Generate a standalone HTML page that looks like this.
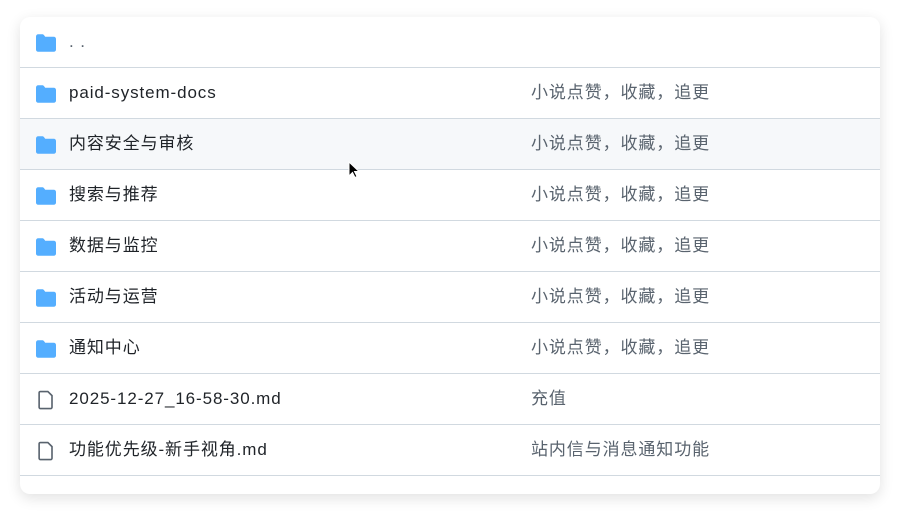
<!DOCTYPE html>
<html><head><meta charset="utf-8"><style>
body{margin:0;width:900px;height:515px;background:#fff;font-family:"Liberation Sans","Noto Sans CJK SC",sans-serif;overflow:hidden}
.card{position:absolute;left:20px;top:17px;width:860px;height:477px;border-radius:10px;background:#fff;box-shadow:0 4px 14px rgba(0,0,0,0.12);overflow:hidden}
.row{position:absolute;left:0;width:860px;height:50px;border-bottom:1px solid #d1d9e0;font-size:17px;letter-spacing:0.9px;color:#1f2328}
.row .ic{position:absolute;left:16px;top:16px}
.row .n{position:absolute;left:49px;top:15px;line-height:20px}
.row .d{position:absolute;left:511px;top:15px;line-height:20px;color:#59636e}
.hov{background:#f6f8fa}
</style></head><body>
<div class="card">
<div class="row" style="top:0"><svg class="ic" width="20" height="20" viewBox="0 0 16 16"><path fill="#54aeff" d="M1.75 1A1.75 1.75 0 0 0 0 2.75v10.5C0 14.216.784 15 1.75 15h12.5A1.75 1.75 0 0 0 16 13.25v-8.5A1.75 1.75 0 0 0 14.25 3H7.5a.25.25 0 0 1-.2-.1l-.9-1.2C6.07 1.26 5.55 1 5 1H1.75Z"/></svg><span class="n" style="color:#59636e">. .</span></div>
<div class="row" style="top:51px"><svg class="ic" width="20" height="20" viewBox="0 0 16 16"><path fill="#54aeff" d="M1.75 1A1.75 1.75 0 0 0 0 2.75v10.5C0 14.216.784 15 1.75 15h12.5A1.75 1.75 0 0 0 16 13.25v-8.5A1.75 1.75 0 0 0 14.25 3H7.5a.25.25 0 0 1-.2-.1l-.9-1.2C6.07 1.26 5.55 1 5 1H1.75Z"/></svg><span class="n">paid-system-docs</span><span class="d">小说点赞，收藏，追更</span></div>
<div class="row hov" style="top:102px"><svg class="ic" width="20" height="20" viewBox="0 0 16 16"><path fill="#54aeff" d="M1.75 1A1.75 1.75 0 0 0 0 2.75v10.5C0 14.216.784 15 1.75 15h12.5A1.75 1.75 0 0 0 16 13.25v-8.5A1.75 1.75 0 0 0 14.25 3H7.5a.25.25 0 0 1-.2-.1l-.9-1.2C6.07 1.26 5.55 1 5 1H1.75Z"/></svg><span class="n">内容安全与审核</span><span class="d">小说点赞，收藏，追更</span></div>
<div class="row" style="top:153px"><svg class="ic" width="20" height="20" viewBox="0 0 16 16"><path fill="#54aeff" d="M1.75 1A1.75 1.75 0 0 0 0 2.75v10.5C0 14.216.784 15 1.75 15h12.5A1.75 1.75 0 0 0 16 13.25v-8.5A1.75 1.75 0 0 0 14.25 3H7.5a.25.25 0 0 1-.2-.1l-.9-1.2C6.07 1.26 5.55 1 5 1H1.75Z"/></svg><span class="n">搜索与推荐</span><span class="d">小说点赞，收藏，追更</span></div>
<div class="row" style="top:204px"><svg class="ic" width="20" height="20" viewBox="0 0 16 16"><path fill="#54aeff" d="M1.75 1A1.75 1.75 0 0 0 0 2.75v10.5C0 14.216.784 15 1.75 15h12.5A1.75 1.75 0 0 0 16 13.25v-8.5A1.75 1.75 0 0 0 14.25 3H7.5a.25.25 0 0 1-.2-.1l-.9-1.2C6.07 1.26 5.55 1 5 1H1.75Z"/></svg><span class="n">数据与监控</span><span class="d">小说点赞，收藏，追更</span></div>
<div class="row" style="top:255px"><svg class="ic" width="20" height="20" viewBox="0 0 16 16"><path fill="#54aeff" d="M1.75 1A1.75 1.75 0 0 0 0 2.75v10.5C0 14.216.784 15 1.75 15h12.5A1.75 1.75 0 0 0 16 13.25v-8.5A1.75 1.75 0 0 0 14.25 3H7.5a.25.25 0 0 1-.2-.1l-.9-1.2C6.07 1.26 5.55 1 5 1H1.75Z"/></svg><span class="n">活动与运营</span><span class="d">小说点赞，收藏，追更</span></div>
<div class="row" style="top:306px"><svg class="ic" width="20" height="20" viewBox="0 0 16 16"><path fill="#54aeff" d="M1.75 1A1.75 1.75 0 0 0 0 2.75v10.5C0 14.216.784 15 1.75 15h12.5A1.75 1.75 0 0 0 16 13.25v-8.5A1.75 1.75 0 0 0 14.25 3H7.5a.25.25 0 0 1-.2-.1l-.9-1.2C6.07 1.26 5.55 1 5 1H1.75Z"/></svg><span class="n">通知中心</span><span class="d">小说点赞，收藏，追更</span></div>
<div class="row" style="top:357px"><svg class="ic" width="20" height="20" viewBox="0 0 16 16"><path fill="none" stroke="#59636e" stroke-width="1.3" d="M3.5 1.2h6l3.3 3.3v9.3a1 1 0 0 1-1 1H3.5a1 1 0 0 1-1-1V2.2a1 1 0 0 1 1-1Z"/></svg><span class="n">2025-12-27_16-58-30.md</span><span class="d">充值</span></div>
<div class="row" style="top:408px"><svg class="ic" width="20" height="20" viewBox="0 0 16 16"><path fill="none" stroke="#59636e" stroke-width="1.3" d="M3.5 1.2h6l3.3 3.3v9.3a1 1 0 0 1-1 1H3.5a1 1 0 0 1-1-1V2.2a1 1 0 0 1 1-1Z"/></svg><span class="n">功能优先级-新手视角.md</span><span class="d">站内信与消息通知功能</span></div>
</div>
<svg style="position:absolute;left:348px;top:161px" width="12" height="18" viewBox="0 0 12 18"><path d="M1 1v14l3.5-3.5 2.5 5 2-1-2.5-5H11Z" fill="#000" stroke="#fff" stroke-width="1"/></svg>
</body></html>
